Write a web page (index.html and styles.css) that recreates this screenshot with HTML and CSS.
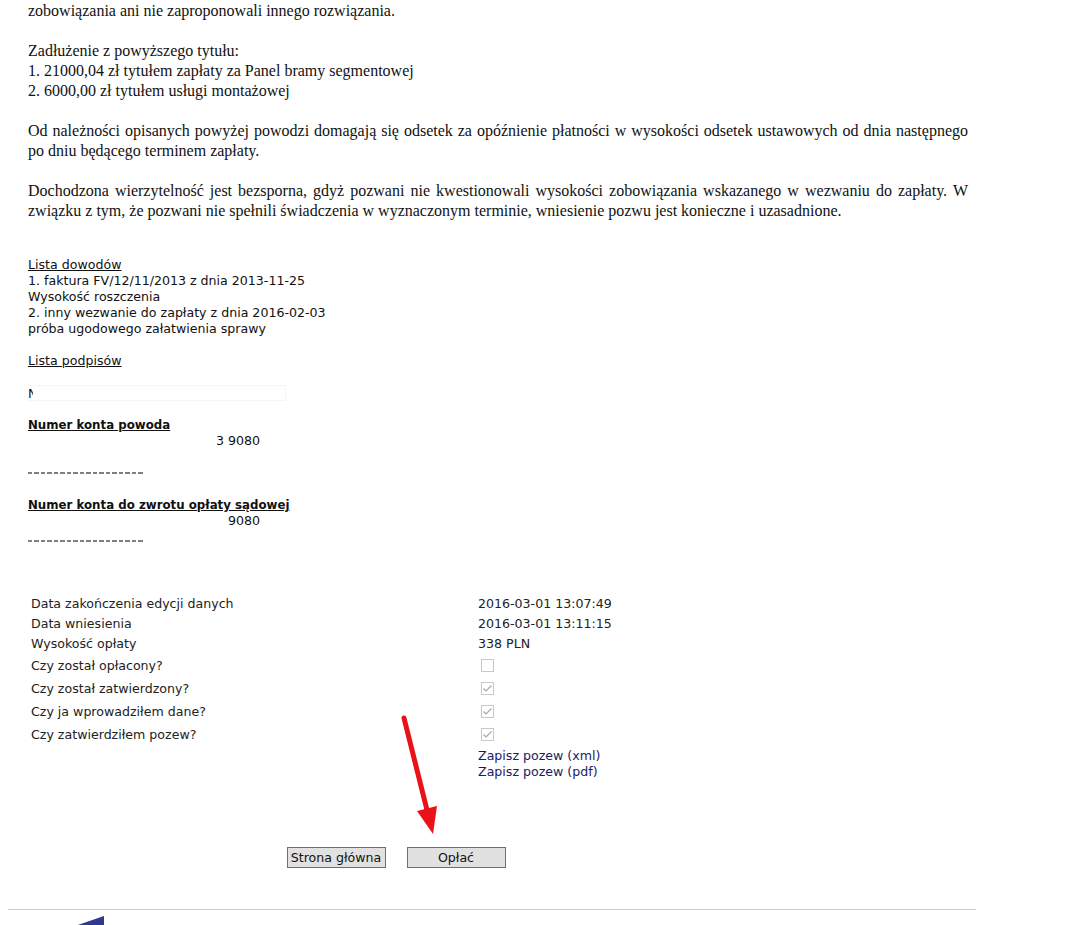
FILE: index.html
```html
<!DOCTYPE html>
<html lang="pl">
  <head>
    <meta charset="utf-8" />
    <title>Pozew</title>
    <link rel="stylesheet" href="styles.css">
  </head>
  <body>
    <div class="page">
      <div class="letter">
        <p>zobowiązania ani nie zaproponowali innego rozwiązania.</p>
        <p>
          Zadłużenie z powyższego tytułu:<br />
          1. 21000,04 zł tytułem zapłaty za Panel bramy segmentowej<br />
          2. 6000,00 zł tytułem usługi montażowej
        </p>
        <p>Od należności opisanych powyżej powodzi domagają się odsetek za opóźnienie płatności w wysokości odsetek ustawowych od dnia następnego po dniu będącego terminem zapłaty.</p>
        <p>Dochodzona wierzytelność jest bezsporna, gdyż pozwani nie kwestionowali wysokości zobowiązania wskazanego w wezwaniu do zapłaty. W związku z tym, że pozwani nie spełnili świadczenia w wyznaczonym terminie, wniesienie pozwu jest konieczne i uzasadnione.</p>
      </div>

      <!-- dowody / podpisy / konta -->
      <div class="details">
        <div class="line"><u>Lista dowodów</u></div>
        <div class="line">1. faktura FV/12/11/2013 z dnia 2013-11-25</div>
        <div class="line">Wysokość roszczenia</div>
        <div class="line">2. inny wezwanie do zapłaty z dnia 2016-02-03</div>
        <div class="line">próba ugodowego załatwienia sprawy</div>
        <div class="line"></div>
        <div class="line"><u>Lista podpisów</u></div>
        <div class="line"></div>
        <div class="line redacted"><span class="cut">N</span></div>
        <div class="line"></div>
        <div class="line"><b class="head"><u>Numer konta powoda</u></b></div>
        <div class="line"><span class="acc acc-1">3 9080</span></div>
        <div class="line"></div>
        <div class="line"><span class="scrap"></span></div>
        <div class="line"></div>
        <div class="line"><b class="head"><u>Numer konta do zwrotu opłaty sądowej</u></b></div>
        <div class="line"><span class="acc acc-2">9080</span></div>
        <div class="line"><span class="scrap scrap-low"></span></div>
      </div>

      <div class="form">
        <div class="info">
          <div class="row">Data zakończenia edycji danych</div>
          <div class="row">2016-03-01 13:07:49</div>
          <div class="row">Data wniesienia</div>
          <div class="row">2016-03-01 13:11:15</div>
          <div class="row">Wysokość opłaty</div>
          <div class="row">338 PLN</div>

          <div class="row row-check">Czy został opłacony?</div>
          <div class="row row-check"><span class="check"></span></div>
          <div class="row row-check">Czy został zatwierdzony?</div>
          <div class="row row-check"><span class="check checked"></span></div>
          <div class="row row-check">Czy ja wprowadziłem dane?</div>
          <div class="row row-check"><span class="check checked"></span></div>
          <div class="row row-check">Czy zatwierdziłem pozew?</div>
          <div class="row row-check"><span class="check checked"></span></div>

          <div class="row row-link first"></div>
          <div class="row row-link first"><a href="#">Zapisz pozew (xml)</a></div>
          <div class="row row-link"></div>
          <div class="row row-link"><a href="#">Zapisz pozew (pdf)</a></div>
        </div>

        <div class="buttons">
          <button type="button" class="btn">Strona główna</button>
          <button type="button" class="btn">Opłać</button>
        </div>
      </div>

      <hr class="sep" />

      <div class="footer">
        <svg class="logo" width="40" height="12" viewBox="0 0 40 12">
          <polygon points="2,12 34,1 34,12" fill="#2e3a8f" />
        </svg>
      </div>

      <!-- czerwona strzałka (adnotacja) -->
      <svg class="arrow" width="50" height="130" viewBox="0 0 50 130">
        <line x1="9" y1="8" x2="32" y2="100" stroke="#ea1119" stroke-width="5" stroke-linecap="round" />
        <polygon points="22,101 42,96 38,124" fill="#ea1119" />
      </svg>
    </div>
  </body>
</html>
```

FILE: styles.css
```css
* {
  box-sizing: border-box;
}

body {
  margin: 0;
  background: #fff;
  overflow: hidden;
}

.page {
  position: relative;
  width: 968px;
  margin-left: 8px;
}

.letter {
  padding: 1px 8px 0 20px;
  font-family: "Liberation Serif", "Times New Roman", serif;
  font-size: 16px;
  line-height: 20px;
  color: #111;
  text-align: justify;
}

.letter p {
  margin: 0 0 20px;
}

.details {
  margin-top: 36px;
  padding-left: 20px;
  font-family: "DejaVu Sans", Verdana, sans-serif;
  font-size: 12.6px;
  line-height: 16px;
  color: #111;
}

.details .line {
  display: flow-root;
  height: 16px;
  white-space: nowrap;
}

.details .head {
  font-size: 11.8px;
}

.details .redacted {
  width: 258px;
  border: 1px solid #f6f6f6;
  border-left: 0;
}

.details .cut {
  display: inline-block;
  width: 5px;
  overflow: hidden;
  vertical-align: top;
}

.details .acc {
  display: flex;
  justify-content: flex-end;
  overflow: hidden;
}

.details .acc-1 {
  margin-left: 189px;
  width: 43px;
}

.details .acc-2 {
  width: 232px;
}

.details .scrap {
  display: block;
  width: 117px;
  height: 2px;
  margin-top: 7px;
  background: repeating-linear-gradient(90deg, #555 0 4px, transparent 4px 6px, #555 6px 11px, transparent 11px 13px);
  opacity: 0.75;
}

.details .scrap-low {
  margin-top: 11px;
}

.form {
  width: 730px;
  margin: 49px 0 0 23px;
  font-family: "DejaVu Sans", Verdana, sans-serif;
  font-size: 12.6px;
  color: #222;
}

.info {
  display: grid;
  grid-template-columns: 447px auto;
}

.info .row {
  height: 20px;
  line-height: 20px;
  white-space: nowrap;
}

.info .row-check {
  height: 23px;
  line-height: 23px;
  display: flex;
  align-items: center;
}

.info .row-link {
  height: 16px;
  line-height: 16px;
}

.info .row-link.first {
  margin-top: 2px;
}

.info a {
  color: #1c1c60;
  text-decoration: none;
}

.check {
  display: inline-block;
  width: 13px;
  height: 13px;
  margin-left: 3px;
  border: 1px solid #c8c8c8;
  background: #fff;
}

.check.checked {
  background: #fff url("data:image/svg+xml,%3Csvg xmlns='http://www.w3.org/2000/svg' width='11' height='11' viewBox='0 0 11 11'%3E%3Cpolyline points='1.5,5.5 4,8 9.5,2.5' fill='none' stroke='%23a8a8a8' stroke-width='1.2'/%3E%3C/svg%3E") no-repeat center;
}

.buttons {
  display: flex;
  justify-content: center;
  gap: 21px;
  margin-top: 67px;
}

.btn {
  width: 99px;
  height: 21px;
  padding: 0;
  font-family: "DejaVu Sans", Verdana, sans-serif;
  font-size: 12.6px;
  color: #111;
  background: #e1e1e1;
  border: 1px solid #6f6f6f;
  border-radius: 0;
}

.sep {
  margin: 41px 0 0;
  border: 0;
  border-top: 1px solid #cfcfcf;
}

.footer {
  height: 30px;
  padding: 5px 0 0 62px;
}

.logo {
  display: block;
}

.arrow {
  position: absolute;
  left: 387px;
  top: 710px;
}
```
